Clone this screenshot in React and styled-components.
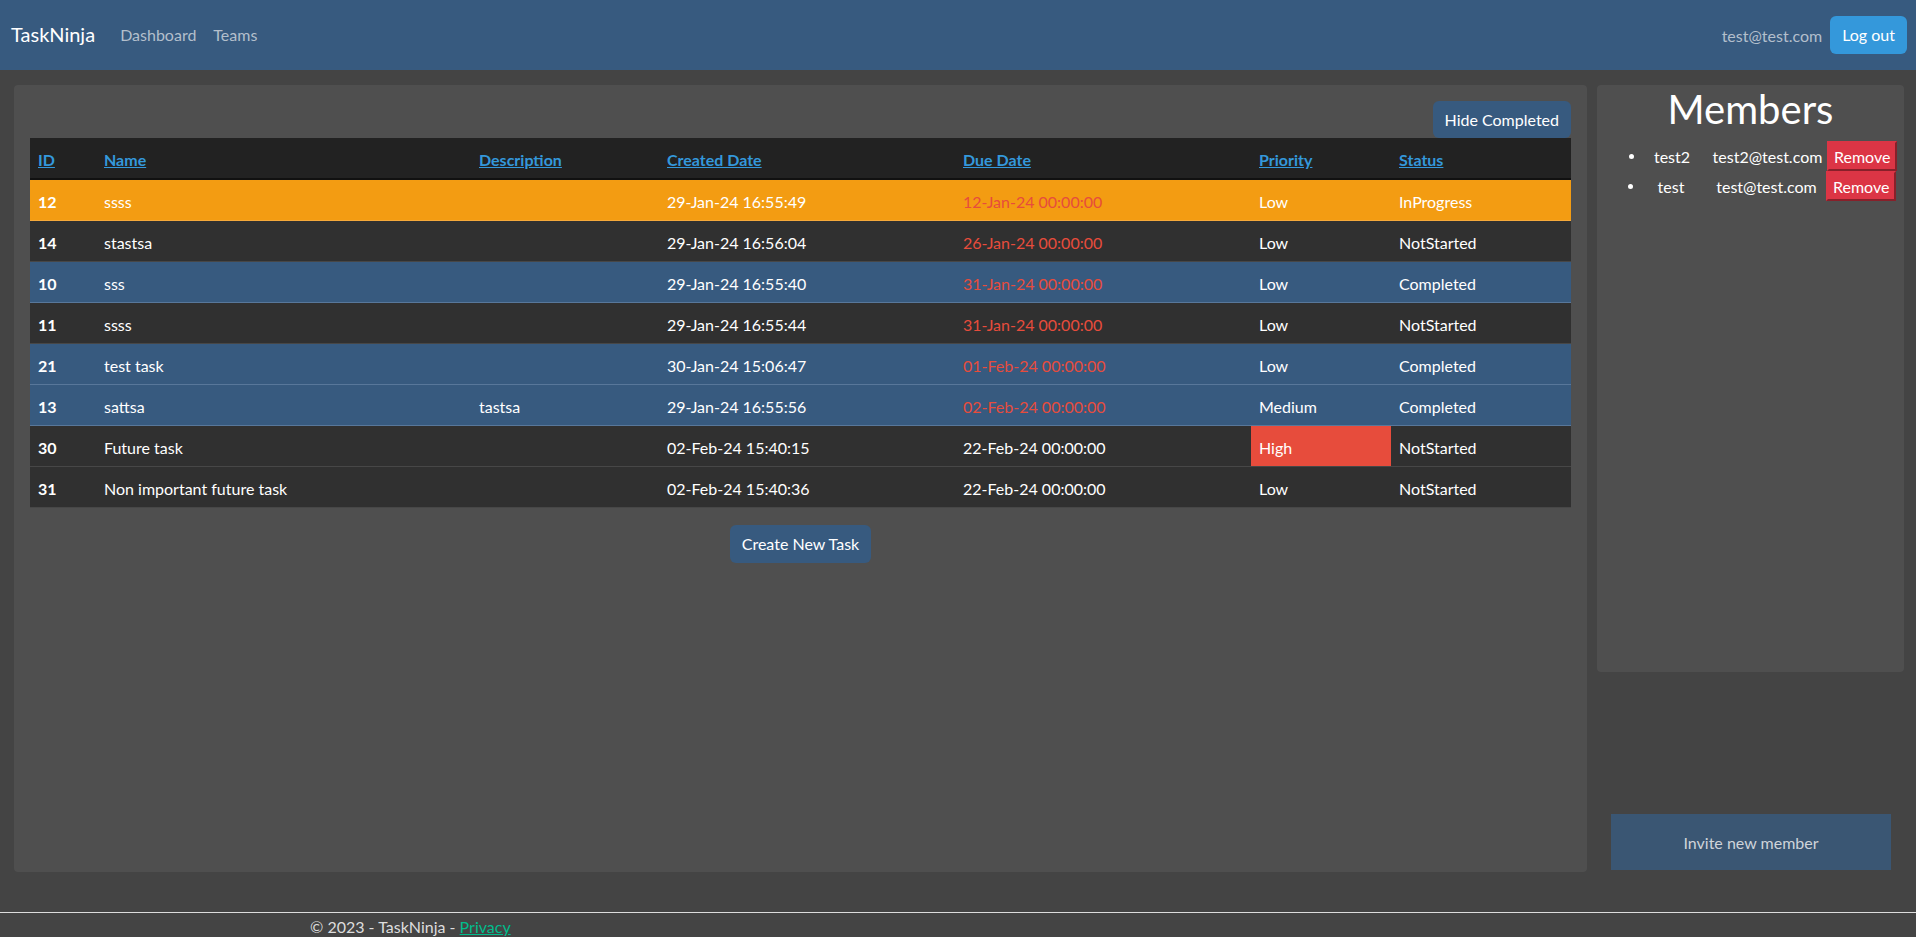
import React from "react";
import styled, { createGlobalStyle } from "styled-components";

const GlobalStyle = createGlobalStyle`
  html, body {
    margin: 0;
    padding: 0;
    background: #444444;
    font-family: Lato, "Noto Sans", "Liberation Sans", sans-serif;
    font-size: 16px;
    color: #ffffff;
  }
  * { box-sizing: border-box; }
`;

const Navbar = styled.nav`
  height: 70px;
  background: #375a7f;
  display: flex;
  align-items: center;
  padding: 0 9px 2px 11px;
`;

const Brand = styled.a`
  font-size: 20px;
  color: #ffffff;
  margin-right: 25px;
  text-decoration: none;
`;

const NavLink = styled.a`
  font-size: 16px;
  color: #b3bfcc;
  margin-right: 17px;
  text-decoration: none;
`;

const NavRight = styled.div`
  margin-left: auto;
  margin-top: 2px;
  display: flex;
  align-items: center;
  gap: 8px;
`;

const UserEmail = styled.span`
  color: #b3bfcc;
  font-size: 16px;
`;

const Button = styled.button`
  font-family: inherit;
  font-size: 16px;
  line-height: 24px;
  height: ${(p) => p.$h || 38}px;
  padding: 0 12px;
  border: none;
  border-radius: 6px;
  color: #ffffff;
  background: ${(p) => p.$bg || "#375a7f"};
  cursor: pointer;
`;

const Main = styled.main`
  display: flex;
  gap: 10px;
  padding: 15px 12px 0 14px;
`;

const TaskPanel = styled.section`
  width: 1573px;
  height: 787px;
  background: #4f4f4f;
  border-radius: 4px;
  padding: 16px;
  display: flex;
  flex-direction: column;
`;

const PanelTop = styled.div`
  display: flex;
  justify-content: flex-end;
`;

const Table = styled.table`
  width: 100%;
  table-layout: fixed;
  border-collapse: collapse;
  font-size: 16px;
  line-height: 24px;
`;

const HeadRow = styled.tr`
  background: #222222;
  border-bottom: 2px solid #111111;
`;

const Th = styled.th`
  text-align: left;
  padding: 10px 8px 6px;
  font-weight: 700;

  a {
    color: #3498db;
    text-decoration: underline;
  }
`;

const rowColors = {
  progress: { bg: "#f39c12", line: "#f5a93a" },
  dark: { bg: "#303030", line: "#474747" },
  done: { bg: "#375a7f", line: "#58779a" },
};

const Row = styled.tr`
  background: ${(p) => rowColors[p.$kind].bg};
  border-bottom: 1px solid ${(p) => rowColors[p.$kind].line};
`;

const IdCell = styled.th`
  text-align: left;
  padding: 10px 8px 6px;
  font-weight: 700;
`;

const Td = styled.td`
  padding: 10px 8px 6px;
  white-space: nowrap;
  color: ${(p) => (p.$late ? "#e74c3c" : "#ffffff")};
  background: ${(p) => (p.$high ? "#e74c3c" : "transparent")};
`;

const CreateWrap = styled.div`
  display: flex;
  justify-content: center;
  margin-top: 17px;
`;

const SideColumn = styled.aside`
  width: 307px;
  height: 787px;
  display: flex;
  flex-direction: column;
  justify-content: space-between;
`;

const MembersPanel = styled.section`
  height: 587px;
  background: #4f4f4f;
  border-radius: 4px;
  padding: 0 0 0 29px;
`;

const MembersTitle = styled.h1`
  margin: 0 0 8px -29px;
  font-size: 40px;
  font-weight: 400;
  line-height: 48px;
  text-align: center;
`;

const MemberList = styled.ul`
  margin: 0;
  padding: 0;
  list-style: none;
`;

const MemberRow = styled.li`
  display: grid;
  grid-template-columns: 18px 56px 127px auto;
  align-items: center;
  height: 30px;
  margin-left: ${(p) => p.$shift || 0}px;
`;

const Bullet = styled.span`
  width: 5px;
  height: 5px;
  border-radius: 50%;
  background: #ffffff;
  margin-left: 3px;
`;

const Centered = styled.span`
  text-align: center;
  padding-left: ${(p) => p.$pad || 0}px;
`;

const RemoveButton = styled.button`
  font-family: inherit;
  font-size: 16px;
  height: 30px;
  padding: 0 5px;
  color: #ffffff;
  background: #dc3545;
  border: 2px outset #dc3545;
  cursor: pointer;
  justify-self: start;
`;

const InviteButton = styled.button`
  font-family: inherit;
  font-size: 16px;
  height: 56px;
  margin: 0 13px 2px 14px;
  background: #3a5673;
  color: #cfd4da;
  border: none;
  cursor: pointer;
`;

const Footer = styled.footer`
  margin-top: 40px;
  border-top: 1px solid #dddddd;
  height: 60px;
`;

const FooterInner = styled.div`
  max-width: 1320px;
  margin: 0 auto;
  padding: 2px 12px 0;
  line-height: 24px;
  color: #dddddd;

  a {
    color: #00bc8c;
    text-decoration: underline;
  }
`;

const tasks = [
  { id: 12, name: "ssss", desc: "", created: "29-Jan-24 16:55:49", due: "12-Jan-24 00:00:00", late: true, priority: "Low", status: "InProgress", kind: "progress" },
  { id: 14, name: "stastsa", desc: "", created: "29-Jan-24 16:56:04", due: "26-Jan-24 00:00:00", late: true, priority: "Low", status: "NotStarted", kind: "dark" },
  { id: 10, name: "sss", desc: "", created: "29-Jan-24 16:55:40", due: "31-Jan-24 00:00:00", late: true, priority: "Low", status: "Completed", kind: "done" },
  { id: 11, name: "ssss", desc: "", created: "29-Jan-24 16:55:44", due: "31-Jan-24 00:00:00", late: true, priority: "Low", status: "NotStarted", kind: "dark" },
  { id: 21, name: "test task", desc: "", created: "30-Jan-24 15:06:47", due: "01-Feb-24 00:00:00", late: true, priority: "Low", status: "Completed", kind: "done" },
  { id: 13, name: "sattsa", desc: "tastsa", created: "29-Jan-24 16:55:56", due: "02-Feb-24 00:00:00", late: true, priority: "Medium", status: "Completed", kind: "done" },
  { id: 30, name: "Future task", desc: "", created: "02-Feb-24 15:40:15", due: "22-Feb-24 00:00:00", late: false, priority: "High", status: "NotStarted", kind: "dark" },
  { id: 31, name: "Non important future task", desc: "", created: "02-Feb-24 15:40:36", due: "22-Feb-24 00:00:00", late: false, priority: "Low", status: "NotStarted", kind: "dark" },
];

const columns = [
  ["ID", 66],
  ["Name", 375],
  ["Description", 188],
  ["Created Date", 296],
  ["Due Date", 296],
  ["Priority", 140],
  ["Status", 180],
];

const members = [
  { name: "test2", email: "test2@test.com", shift: 0 },
  { name: "test", email: "test@test.com", shift: -1 },
];

export default function App() {
  return (
    <>
      <GlobalStyle />
      <Navbar>
        <Brand href="#">TaskNinja</Brand>
        <NavLink href="#">Dashboard</NavLink>
        <NavLink href="#">Teams</NavLink>
        <NavRight>
          <UserEmail>test@test.com</UserEmail>
          <Button $bg="#3498db">Log out</Button>
        </NavRight>
      </Navbar>

      <Main>
        <TaskPanel>
          <PanelTop>
            <Button $h={37}>Hide Completed</Button>
          </PanelTop>
          <Table>
            <colgroup>
              {columns.map(([label, w]) => (
                <col key={label} style={{ width: w }} />
              ))}
            </colgroup>
            <thead>
              <HeadRow>
                {columns.map(([label]) => (
                  <Th key={label}>
                    <a href="#">{label}</a>
                  </Th>
                ))}
              </HeadRow>
            </thead>
            <tbody>
              {tasks.map((t) => (
                <Row key={t.id} $kind={t.kind}>
                  <IdCell>{t.id}</IdCell>
                  <Td>{t.name}</Td>
                  <Td>{t.desc}</Td>
                  <Td>{t.created}</Td>
                  <Td $late={t.late}>{t.due}</Td>
                  <Td $high={t.priority === "High"}>{t.priority}</Td>
                  <Td>{t.status}</Td>
                </Row>
              ))}
            </tbody>
          </Table>
          <CreateWrap>
            <Button>Create New Task</Button>
          </CreateWrap>
        </TaskPanel>

        <SideColumn>
          <MembersPanel>
            <MembersTitle>Members</MembersTitle>
            <MemberList>
              {members.map((m) => (
                <MemberRow key={m.email} $shift={m.shift}>
                  <Bullet />
                  <Centered>{m.name}</Centered>
                  <Centered $pad={8}>{m.email}</Centered>
                  <RemoveButton>Remove</RemoveButton>
                </MemberRow>
              ))}
            </MemberList>
          </MembersPanel>
          <InviteButton>Invite new member</InviteButton>
        </SideColumn>
      </Main>

      <Footer>
        <FooterInner>
          © 2023 - TaskNinja - <a href="#">Privacy</a>
        </FooterInner>
      </Footer>
    </>
  );
}
